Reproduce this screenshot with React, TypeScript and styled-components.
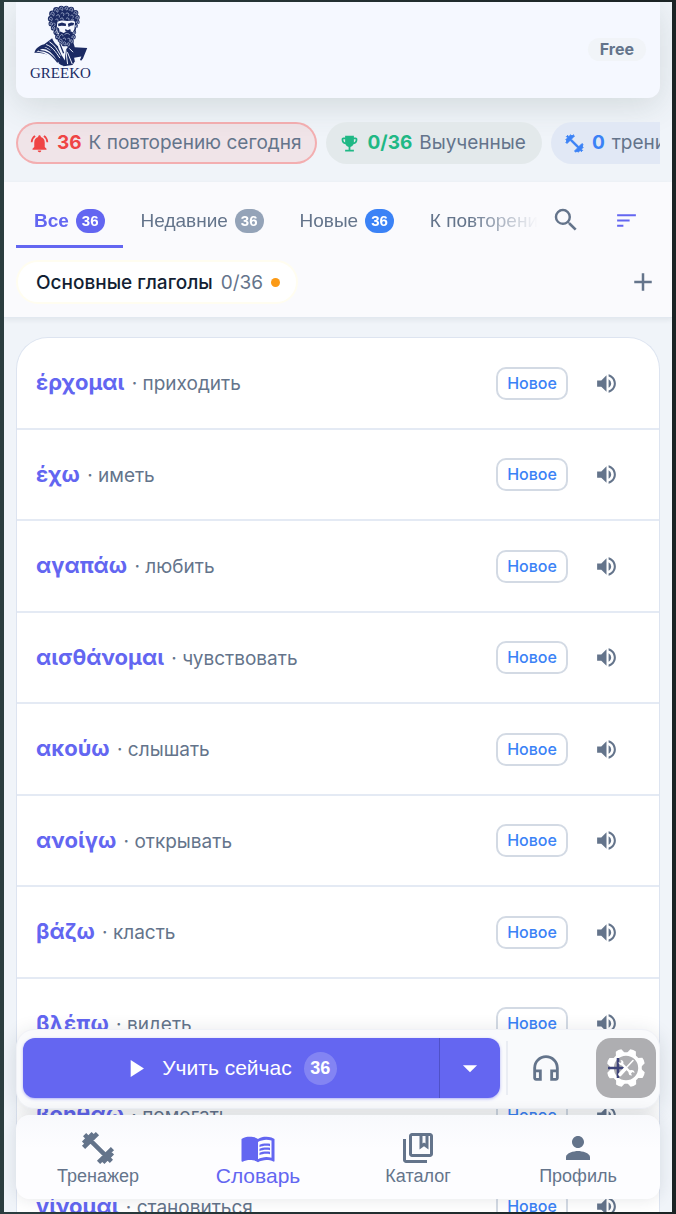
import React from 'react';
import styled, { createGlobalStyle, css } from 'styled-components';
import {
  MdNotificationsActive,
  MdEmojiEvents,
  MdFitnessCenter,
  MdSearch,
  MdSort,
  MdAdd,
  MdVolumeUp,
  MdPlayArrow,
  MdArrowDropDown,
  MdMenuBook,
  MdOutlineCollectionsBookmark,
  MdPerson,
  MdOutlineHeadphones,
} from 'react-icons/md';

const color = {
  indigo: '#6366f1',
  slate: '#64748b',
  ink: '#131f33',
  blue: '#3b82f6',
  red: '#ef4444',
  green: '#1fb885',
  line: '#e2e8f0',
  navy: '#1b2a63',
};

const GlobalStyle = createGlobalStyle`
  *, *::before, *::after { box-sizing: border-box; }
  body {
    margin: 0;
    background: linear-gradient(90deg, #2b3d3f, #1b2324);
    font-family: Inter, "Liberation Sans", sans-serif;
    color: ${color.slate};
  }
  button { font: inherit; color: inherit; border: 0; background: none; padding: 0; cursor: pointer; }
  a { color: inherit; text-decoration: none; }
  svg { display: block; flex: none; }
`;

const Frame = styled.div`
  height: 100vh;
  padding: 2px 4px;
`;

const Screen = styled.div`
  position: relative;
  height: 100%;
  overflow: hidden;
  display: flex;
  flex-direction: column;
  background: #f0f4f9;
`;

const Header = styled.header`
  flex: none;
  display: flex;
  align-items: center;
  justify-content: space-between;
  height: 96px;
  margin: 0 12px;
  padding: 0 14px 2px;
  background: #f5f8ff;
  border-radius: 0 0 12px 12px;
  box-shadow: 0 8px 32px rgba(60, 90, 80, 0.16);
`;

const Brand = styled.a`
  display: flex;
  flex-direction: column;
  align-items: center;
  padding-bottom: 14px;
`;

const BrandName = styled.span`
  font: 400 15px/12px "Liberation Serif", serif;
  color: ${color.navy};
`;

const Plan = styled.span`
  padding: 0 12px;
  border-radius: 12px;
  background: #f1f4f8;
  font-size: 16px;
  font-weight: 700;
  line-height: 23px;
`;

const Stats = styled.div`
  flex: none;
  display: flex;
  gap: 9px;
  margin: 24px 12px 18px;
  overflow: hidden;
`;

const Stat = styled.button<{ $tone: string; $fill: string; $outline?: string }>`
  flex: none;
  display: flex;
  align-items: center;
  gap: 7px;
  height: 42px;
  padding: 0 14px 0 11px;
  border: 2px solid ${(p) => p.$outline ?? 'transparent'};
  border-radius: 21px;
  background: ${(p) => p.$fill};
  font-size: 19px;
  line-height: 24px;
  white-space: nowrap;

  svg { color: ${(p) => p.$tone}; }
  b { color: ${(p) => p.$tone}; font-weight: 700; }
`;

const Toolbar = styled.section`
  flex: none;
  padding: 10px 12px 13px;
  background: #fafafd;
  border-bottom: 1px solid ${color.line};
  box-shadow: 0 2px 5px rgba(30, 41, 59, 0.07);
`;

const TabRow = styled.div`
  display: flex;
  align-items: center;
`;

const Tabs = styled.div`
  flex: 1;
  min-width: 0;
  display: flex;
  overflow: hidden;
  mask-image: linear-gradient(90deg, #000 calc(100% - 72px), transparent calc(100% - 2px));
`;

const Tab = styled.button<{ $active?: boolean }>`
  flex: none;
  display: flex;
  align-items: center;
  gap: 7px;
  height: 56px;
  padding: 5px 18px 0;
  border-bottom: 3px solid transparent;
  font-family: "Liberation Sans", sans-serif;
  font-size: 19px;
  white-space: nowrap;
  ${(p) =>
    p.$active &&
    css`
      color: ${color.indigo};
      border-color: ${color.indigo};
      font-weight: 700;
    `}
`;

const Count = styled.span<{ $fill: string }>`
  padding: 0 6px;
  border-radius: 12px;
  background: ${(p) => p.$fill};
  color: #fff;
  font-size: 15px;
  font-weight: 700;
  line-height: 24px;
`;

const IconButton = styled.button<{ $width: number; $tone?: string }>`
  flex: none;
  display: flex;
  align-items: center;
  justify-content: center;
  width: ${(p) => p.$width}px;
  height: 44px;
  color: ${(p) => p.$tone ?? color.slate};
`;

const FilterRow = styled.div`
  display: flex;
  align-items: center;
  justify-content: space-between;
  margin-top: 12px;
`;

const Filter = styled.button`
  display: flex;
  align-items: center;
  gap: 8px;
  height: 44px;
  padding: 0 16px 0 18px;
  border: 2px solid #fffdf0;
  border-radius: 22px;
  background: #fff;
  font-size: 19px;

  strong { color: ${color.ink}; font-weight: 500; }
`;

const Dot = styled.i`
  width: 9px;
  height: 9px;
  border-radius: 50%;
  background: #fb9a16;
`;

const WordList = styled.ul`
  flex: none;
  display: grid;
  grid-auto-rows: 92px 91px;
  margin: 19px 12px 0;
  padding: 0;
  list-style: none;
  border: 1px solid #dde4f0;
  border-bottom: 0;
  border-radius: 32px 32px 0 0;
  background: #fff;
`;

const Word = styled.li`
  display: flex;
  align-items: center;
  padding: 0 31px 0 19px;
  border-bottom: 2px solid #e4eaf4;
`;

const WordText = styled.p`
  flex: 1;
  margin: 0;
  font-size: 19px;
  line-height: 28px;

  b { margin-right: 2px; color: ${color.indigo}; font-size: 22px; font-weight: 700; }
`;

const Status = styled.span`
  height: 33px;
  margin-right: 16px;
  padding: 0 8px;
  border: 2px solid #d3dae4;
  border-radius: 10px;
  color: ${color.blue};
  font-size: 16px;
  font-weight: 500;
  line-height: 29px;
  text-align: center;
  min-width: 72px;
`;

const Dock = styled.div`
  position: absolute;
  left: 12px;
  right: 12px;
  bottom: 13px;
  display: flex;
  flex-direction: column;
  gap: 6px;
`;

const ActionBar = styled.div`
  display: flex;
  align-items: center;
  height: 80px;
  padding: 0 3px 2px 6px;
  border-radius: 18px;
  background: #f9fafc;
  border: 1px solid #f0f2f7;
  box-shadow: 0 4px 20px rgba(30, 41, 59, 0.14);
`;

const LearnGroup = styled.div`
  flex: 1;
  display: flex;
  height: 60px;
  border-radius: 12px;
  background: #6466f1;
  color: #fff;
  box-shadow: 0 1px 3px rgba(99, 102, 241, 0.5);
`;

const LearnButton = styled.button`
  flex: 1;
  display: flex;
  align-items: center;
  justify-content: center;
  gap: 12px;
  padding-right: 4px;
  border-right: 1px solid #4f51c8;
  font: 400 21px "Liberation Sans", sans-serif;
`;

const LearnCount = styled.span`
  width: 33px;
  border-radius: 50%;
  background: rgba(255, 255, 255, 0.2);
  font-size: 18px;
  font-weight: 700;
  line-height: 33px;
`;

const MoreButton = styled.button`
  width: 60px;
  display: flex;
  align-items: center;
  justify-content: center;
`;

const Divider = styled.span`
  width: 2px;
  height: 54px;
  margin-left: 6px;
  background: #eaedf3;
`;

const GearButton = styled.button`
  flex: none;
  display: flex;
  align-items: center;
  justify-content: center;
  width: 60px;
  height: 60px;
  margin-left: 12px;
  border-radius: 15px;
  background: #aeaeb1;
`;

const Nav = styled.nav`
  display: grid;
  grid-template-columns: repeat(4, 1fr);
  height: 84px;
  padding: 0 2px;
  border-radius: 14px;
  background: linear-gradient(#f8f9fc, #fdfdff 40%);
  box-shadow: 0 0 16px rgba(30, 41, 59, 0.12);
`;

const NavItem = styled.a<{ $active?: boolean }>`
  display: flex;
  flex-direction: column;
  align-items: center;
  padding-top: 15px;
  font-family: "Liberation Sans", sans-serif;
  font-size: ${(p) => (p.$active ? 21 : 18)}px;
  line-height: 20px;
  color: ${(p) => (p.$active ? color.indigo : color.slate)};
`;

const Dumbbell = styled(MdFitnessCenter)`
  path:not([fill='none']) {
    stroke: currentColor;
    stroke-width: 1;
  }
  path[fill='none'] {
    stroke: none;
  }
`;

const curls: [number, number, number][] = [
  [96, 72, 8], [95, 57, 9], [100, 42, 10], [112, 31, 10], [127, 26, 9], [142, 25, 8],
  [157, 29, 9], [170, 39, 9], [175, 53, 8], [176, 67, 7], [172, 79, 6], [103, 85, 8],
];

const beard: [number, number, number][] = [
  [112, 98, 9], [117, 112, 9], [125, 124, 9], [136, 132, 9], [148, 134, 8],
  [157, 125, 8], [163, 112, 8], [166, 99, 6],
];

const Bust = () => (
  <svg width="56" height="62" viewBox="38 15 170 189" aria-hidden="true">
    <g fill={color.navy}>
      {[...curls, ...beard].map(([x, y, r]) => (
        <circle key={`${x}-${y}`} cx={x} cy={y} r={r} />
      ))}
      <path d="M98 40l30-14 34 8 14 30-8 44-24 28-28-22-16-36z" />
      <path d="M45 161c3-13 14-22 30-26l24-19c6 16 22 32 44 38l-1 47c-10 1-20-4-27-12-16-18-38-30-70-28z" />
      <path d="M140 152l22-28 6 20 38 2-13 32-8 10-16-2-8 12-28 4z" />
    </g>
    <g fill="#f5f8ff">
      <path d="M115 66c10-5 22-5 30-2l16-2 8 4-2 22-5 10-9-4-9 1-10 5-10-4-6 10-6-12z" />
      <path d="M114 124l12 10 14 20-2 30-10-16-10-22z" />
      <path d="M51 157l30-14 16 8 24 44-28-22-20-12z" />
      <path d="M166 176l22-4-4 10 6 6-10 4-12-6z" />
    </g>
    <g fill={color.navy}>
      <path d="M117 72l12-4 12 4v7l-13-1-10 2z" />
      <path d="M147 72l10-4 9 2-2 7-8 1-7 4z" />
      <path d="M139 88l8 4 7-4 2 6-8 3-9-2z" />
      <path d="M114 82l6 5 3 16-8-4z" />
    </g>
    <g fill="none" stroke={color.navy} strokeWidth="4">
      <path d="M58 154c22-2 38 10 58 36M68 146c22 0 36 16 50 40M80 141c14 4 24 18 34 34M122 132l12 30" />
    </g>
    <g fill="none" stroke="#f5f8ff" strokeWidth="3" strokeLinecap="round">
      <path d="M82 136c18 6 28 22 40 40M92 128c14 8 22 22 32 40" />
      <path d="M146 160l14 34M152 148l10 10M140 148l6 46" />
    </g>
    <g fill="none" stroke="#cdd7ec" strokeWidth="2" strokeLinecap="round">
      {[...curls, ...beard].map(([x, y, r]) => (
        <path key={`${x}-${y}`} d={`M${x - r / 2} ${y + 2}c0-${r} ${r}-${r} ${r}-1s-5 4-5 1`} />
      ))}
      <path d="M112 48c4-7 12-3 9 4M126 41c5-6 12 0 8 6M141 41c6-5 12 1 8 7M156 47c5-4 10 1 7 6M109 60c4-5 9-2 8 2M124 57c5-6 11-1 9 3M142 56c5-5 10 0 8 4M158 59c4-3 8 0 6 3M104 70c4-1 6 4 3 8" />
      <path d="M124 108c3-6 9-4 8 1M138 104c5-4 10-3 14 1M132 118c4-5 9-2 8 3M147 117c5-3 8 2 5 6" />
    </g>
  </svg>
);

const teeth = [22, 67, 112, 157, 202, 247, 292, 337];

const ToolsGear = () => (
  <svg width="40" height="40" viewBox="0 0 40 40" aria-hidden="true">
    <g fill="#fff">
      {teeth.map((angle) => (
        <path key={angle} d="M15 6l2-5q3-1 6 0l2 5z" transform={`rotate(${angle} 20 20)`} />
      ))}
    </g>
    <circle cx="20" cy="20" r="14" fill="none" stroke="#fff" strokeWidth="3.6" />
    <path d="M12 10v20M2 20h18" stroke="#3d4379" strokeWidth="2.6" />
    <path d="M27 12.5L20 20" stroke="#fff" strokeWidth="1.6" strokeLinecap="round" />
    <path d="M19 21l-5 5.5" stroke="#fff" strokeWidth="3.6" strokeLinecap="round" />
    <path d="M15 15l9 9" stroke="#fff" strokeWidth="2.4" />
    <path d="M12.5 14a3 3 0 0 0 4 3l1-2a3 3 0 0 0-3-3l1 2-1 1z" fill="#fff" />
    <path d="M22.5 25a3 3 0 0 1 3-3a3 3 0 0 1 3 3l-2-1-1.5 1.5 1 2a3 3 0 0 1-3.5-2.5z" fill="#fff" />
  </svg>
);

const words: [string, string][] = [
  ['έρχομαι', 'приходить'],
  ['έχω', 'иметь'],
  ['αγαπάω', 'любить'],
  ['αισθάνομαι', 'чувствовать'],
  ['ακούω', 'слышать'],
  ['ανοίγω', 'открывать'],
  ['βάζω', 'класть'],
  ['βλέπω', 'видеть'],
  ['βοηθάω', 'помогать'],
  ['γίνομαι', 'становиться'],
];

export default function App() {
  return (
    <Frame>
      <GlobalStyle />
      <Screen>
        <Header>
          <Brand href="#">
            <Bust />
            <BrandName>GREEKO</BrandName>
          </Brand>
          <Plan>Free</Plan>
        </Header>

        <Stats>
          <Stat $tone={color.red} $fill="rgba(239, 68, 68, 0.09)" $outline="rgba(246, 120, 120, 0.5)">
            <MdNotificationsActive size={21} />
            <b>36</b>К повторению сегодня
          </Stat>
          <Stat $tone={color.green} $fill="#e3e9eb">
            <MdEmojiEvents size={21} />
            <b>0/36</b>Выученные
          </Stat>
          <Stat $tone={color.blue} $fill="#e1e8f5">
            <Dumbbell size={21} />
            <b>0</b>тренировок
          </Stat>
        </Stats>

        <Toolbar>
          <TabRow>
            <Tabs role="tablist">
              <Tab role="tab" aria-selected="true" $active>
                Все<Count $fill={color.indigo}>36</Count>
              </Tab>
              <Tab role="tab">
                Недавние<Count $fill="#94a3b8">36</Count>
              </Tab>
              <Tab role="tab">
                Новые<Count $fill={color.blue}>36</Count>
              </Tab>
              <Tab role="tab">К повторению</Tab>
            </Tabs>
            <IconButton $width={52} aria-label="Поиск">
              <MdSearch size={30} />
            </IconButton>
            <IconButton $width={68} $tone={color.indigo} aria-label="Сортировка">
              <MdSort size={25} />
            </IconButton>
          </TabRow>
          <FilterRow>
            <Filter>
              <strong>Основные глаголы</strong>0/36
              <Dot />
            </Filter>
            <IconButton $width={34} aria-label="Добавить">
              <MdAdd size={30} />
            </IconButton>
          </FilterRow>
        </Toolbar>

        <WordList>
          {words.map(([greek, russian]) => (
            <Word key={greek}>
              <WordText>
                <b>{greek}</b> · {russian}
              </WordText>
              <Status>Новое</Status>
              <IconButton $width={44} aria-label="Прослушать">
                <MdVolumeUp size={25} />
              </IconButton>
            </Word>
          ))}
        </WordList>

        <Dock>
          <ActionBar>
            <LearnGroup>
              <LearnButton>
                <MdPlayArrow size={29} />
                Учить сейчас
                <LearnCount>36</LearnCount>
              </LearnButton>
              <MoreButton aria-label="Режимы">
                <MdArrowDropDown size={34} />
              </MoreButton>
            </LearnGroup>
            <Divider />
            <IconButton $width={76} aria-label="Аудио">
              <MdOutlineHeadphones size={34} />
            </IconButton>
            <GearButton aria-label="Настройки">
              <ToolsGear />
            </GearButton>
          </ActionBar>
          <Nav>
            <NavItem href="#">
              <Dumbbell size={36} />
              Тренажер
            </NavItem>
            <NavItem href="#" $active>
              <MdMenuBook size={36} />
              Словарь
            </NavItem>
            <NavItem href="#">
              <MdOutlineCollectionsBookmark size={36} />
              Каталог
            </NavItem>
            <NavItem href="#">
              <MdPerson size={36} />
              Профиль
            </NavItem>
          </Nav>
        </Dock>
      </Screen>
    </Frame>
  );
}
